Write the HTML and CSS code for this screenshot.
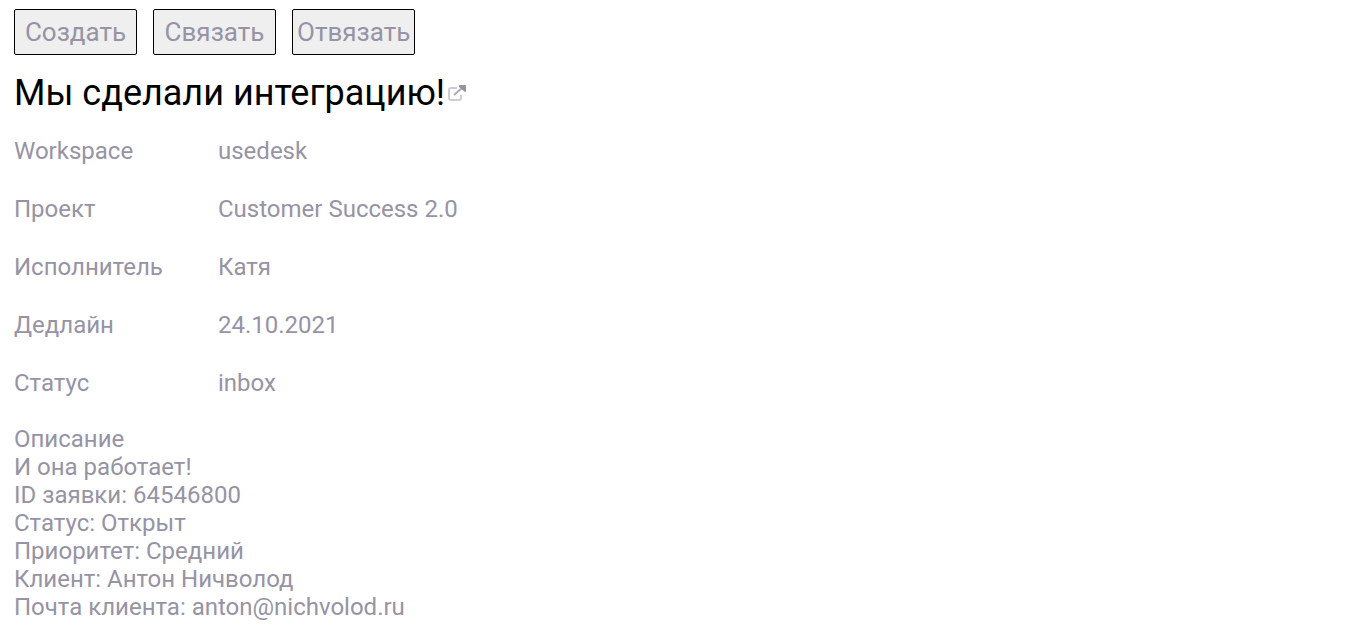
FILE: index.html
```html
<!DOCTYPE html>
<html lang="ru">
<head>
<meta charset="utf-8">
<title>Интеграция</title>
<link rel="stylesheet" href="styles.css">
</head>
<body>
<main class="panel">
  <div class="actions">
    <button type="button" class="button">Создать</button>
    <button type="button" class="button">Связать</button>
    <button type="button" class="button">Отвязать</button>
  </div>
  <h1 class="title">Мы сделали интеграцию!<a class="open-link" href="#" aria-label="Открыть задачу"><svg class="icon" viewBox="0 0 20 18"><path d="M10 4H4Q2 4 2 6V14Q2 16 4 16H12Q14 16 14 14V11" fill="none" stroke="#cdced4" stroke-width="2"/><path d="M7 11L15 4" fill="none" stroke="#a9abb3" stroke-width="2"/><path d="M12 2Q12 1 13 1H18Q19 1 19 2V7Q19 8 18 8L12 3Z" fill="#92949e"/></svg></a></h1>
  <dl class="fields">
    <dt>Workspace</dt><dd>usedesk</dd>
    <dt>Проект</dt><dd>Customer Success 2.0</dd>
    <dt>Исполнитель</dt><dd>Катя</dd>
    <dt>Дедлайн</dt><dd>24.10.2021</dd>
    <dt>Статус</dt><dd>inbox</dd>
  </dl>
  <section class="description">
    <div>Описание</div>
    <div>И она работает!</div>
    <div>ID заявки: 64546800</div>
    <div>Статус: Открыт</div>
    <div>Приоритет: Средний</div>
    <div>Клиент: Антон Ничволод</div>
    <div>Почта клиента: anton@nichvolod.ru</div>
  </section>
</main>
</body>
</html>
```
FILE: styles.css
```css
body {
  margin: 0;
  background: #fff;
  color: #9693a5;
  font: 24px/28px Roboto, sans-serif;
}
.panel { padding: 9px 14px 0; }
.actions { display: flex; gap: 16px; }
.button {
  box-sizing: border-box;
  min-width: 123px;
  height: 46px;
  padding: 0 4px;
  border: 1px solid #000;
  border-radius: 2px;
  background: #efefef;
  color: #9693a5;
  font: 26px/28px Roboto, sans-serif;
}
.title {
  display: flex;
  align-items: center;
  gap: 2px;
  margin: 16px 0 22px;
  color: #000;
  font-size: 36px;
  font-weight: 400;
  line-height: 44px;
}
.open-link { display: flex; }
.icon { width: 20px; height: 18px; }
.fields {
  display: grid;
  grid-template-columns: 204px 1fr;
  row-gap: 30px;
  margin: 0 0 28px;
}
.fields dd { margin: 0; }
```
